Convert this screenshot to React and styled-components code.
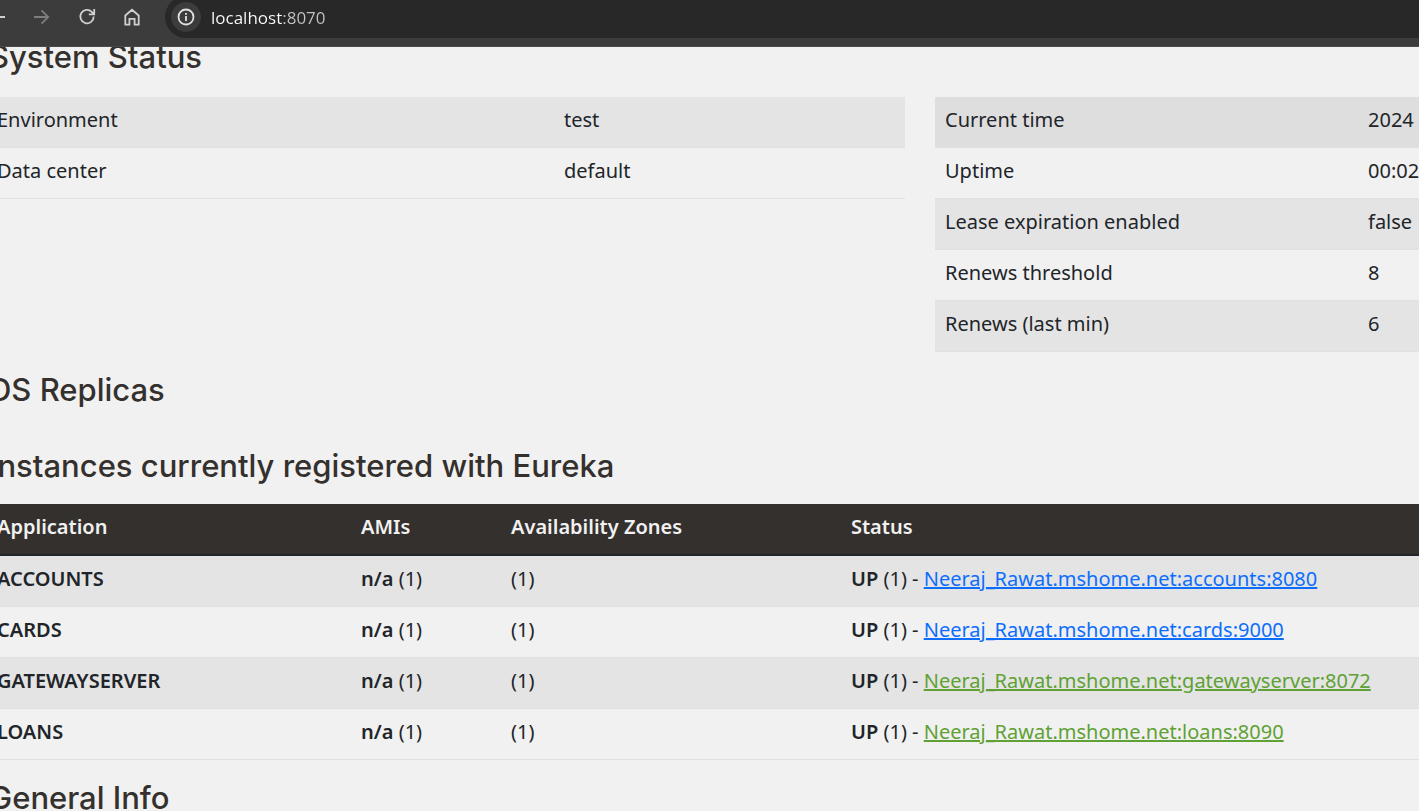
import React from "react";
import styled, { createGlobalStyle } from "styled-components";

const GlobalStyle = createGlobalStyle`
  * { box-sizing: border-box; }
  html, body { margin: 0; background: #f1f1f1; }
  body {
    color: #212529;
    font-family: "Noto Sans", sans-serif;
    font-size: 20px;
    line-height: 30px;
    overflow: hidden;
  }
`;

const Toolbar = styled.header`
  position: relative;
  z-index: 1;
  display: flex;
  align-items: flex-start;
  height: 47px;
  background: #3c3c3c;
  border-bottom: 1px solid #4a4a4a;
  overflow: hidden;
`;

const NavButtons = styled.nav`
  display: flex;
  flex: none;
  gap: 17px;
  margin-left: -17px;
  padding: 3px 0;
`;

const NavButton = styled.button`
  display: flex;
  align-items: center;
  justify-content: center;
  width: 28px;
  height: 28px;
  padding: 0;
  border: 0;
  background: none;
  color: ${(p) => (p.disabled ? "#7d7d7d" : "#cfcfcf")};
`;

const AddressBar = styled.div`
  display: flex;
  flex: 1;
  align-items: center;
  gap: 10px;
  height: 42px;
  margin: -4px 0 0 19px;
  padding-left: 6px;
  background: #282828;
  border-radius: 21px 0 0 21px;
`;

const InfoButton = styled.button`
  display: flex;
  align-items: center;
  justify-content: center;
  width: 30px;
  height: 30px;
  padding: 0;
  border: 0;
  border-radius: 50%;
  background: #3c3c3c;
  color: #e3e3e3;
`;

const AddressInput = styled.input`
  flex: 1;
  min-width: 0;
  height: 30px;
  padding: 0;
  border: 0;
  outline: 0;
  color: #ffffff;
  font-family: "Open Sans", sans-serif;
  font-size: 17px;
  background: linear-gradient(90deg, #ffffff 72px, #c4c4c4 72px);
  background-clip: text;
  -webkit-text-fill-color: transparent;
`;

const Page = styled.main`
  margin: -10px 0 0 -13px;
`;

const Heading = styled.h1`
  margin: 0;
  padding: ${(p) => p.$pad || "18px 0"};
  color: #34302d;
  font-family: Inter, sans-serif;
  font-size: 31px;
  font-weight: 500;
  line-height: 40px;
  text-indent: 2px;
  white-space: nowrap;
`;

const StatusGrid = styled.div`
  display: grid;
  grid-template-columns: 918fr 484fr;
  align-items: start;
  gap: 30px;
`;

const Table = styled.table`
  width: 100%;
  table-layout: fixed;
  border-collapse: separate;
  border-spacing: 0;
  white-space: nowrap;
`;

const Row = styled.tr`
  background: ${(p) => (p.$hovered ? "#dedede" : "#f1f1f1")};
  &:nth-child(odd) {
    background: ${(p) => (p.$hovered ? "#dedede" : "#e4e4e4")};
  }
`;

const Cell = styled.td`
  width: ${(p) => p.$width || "auto"};
  padding: 8px 10px 12px;
  border-bottom: 1px solid #dee0e3;
`;

const HeadCell = styled.th`
  width: ${(p) => p.$width || "auto"};
  padding: 8px 10px 12px;
  background: #34302d;
  border-bottom: 2px solid #212529;
  color: #f1f1f1;
  font-weight: 600;
  text-align: left;
`;

const Strong = styled.b`
  font-weight: 600;
`;

const InstanceLink = styled.a`
  color: ${(p) => (p.$green ? "#5fa134" : "#0d6efd")};
  text-decoration: underline;
  text-decoration-thickness: 2px;
`;

const environment = [
  ["Environment", "test"],
  ["Data center", "default"],
];

const runtime = [
  ["Current time", "2024"],
  ["Uptime", "00:02"],
  ["Lease expiration enabled", "false"],
  ["Renews threshold", "8"],
  ["Renews (last min)", "6"],
];

const instances = [
  ["ACCOUNTS", "Neeraj_Rawat.mshome.net:accounts:8080", false],
  ["CARDS", "Neeraj_Rawat.mshome.net:cards:9000", false],
  ["GATEWAYSERVER", "Neeraj_Rawat.mshome.net:gatewayserver:8072", true],
  ["LOANS", "Neeraj_Rawat.mshome.net:loans:8090", true],
];

function Icon({ children }) {
  return (
    <svg width="20" height="20" viewBox="0 0 20 20" fill="none" stroke="currentColor" strokeWidth="1.8" aria-hidden="true">
      {children}
    </svg>
  );
}

function PropertyTable({ rows, labelWidth, hoveredRow }) {
  return (
    <Table>
      <tbody>
        {rows.map(([label, value], i) => (
          <Row key={label} $hovered={i === hoveredRow}>
            <Cell $width={labelWidth}>{label}</Cell>
            <Cell>{value}</Cell>
          </Row>
        ))}
      </tbody>
    </Table>
  );
}

export default function App() {
  return (
    <>
      <GlobalStyle />
      <Toolbar>
        <NavButtons>
          <NavButton aria-label="Back">
            <Icon><path d="M18 10H3M9 4l-6 6 6 6" /></Icon>
          </NavButton>
          <NavButton aria-label="Forward" disabled>
            <Icon><path d="M2 10H16.500M9.500 3.300L16.200 10l-6.700 6.700" /></Icon>
          </NavButton>
          <NavButton aria-label="Reload">
            <Icon><path d="M16.700 9.500A6.700 6.700 0 1 1 14.700 4.800L17 7M17.200 2V7.400H11.800" /></Icon>
          </NavButton>
          <NavButton aria-label="Home">
            <Icon><path d="M3.300 8.500L10 2.700l6.700 5.800V17.600H12.600V11.800H7.400V17.600H3.300Z" /></Icon>
          </NavButton>
        </NavButtons>
        <AddressBar>
          <InfoButton aria-label="View site information">
            <Icon>
              <circle cx="10" cy="10" r="7.500" />
              <path d="M10 9v5M10 6v1.800" />
            </Icon>
          </InfoButton>
          <AddressInput aria-label="Address" defaultValue="localhost:8070" />
        </AddressBar>
      </Toolbar>
      <Page>
        <Heading $pad="0 0 20px">System Status</Heading>
        <StatusGrid>
          <PropertyTable rows={environment} labelWidth="567px" />
          <PropertyTable rows={runtime} labelWidth="423px" hoveredRow={0} />
        </StatusGrid>
        <Heading as="h2">DS Replicas</Heading>
        <Heading as="h2">Instances currently registered with Eureka</Heading>
        <Table>
          <thead>
            <tr>
              <HeadCell $width="364px">Application</HeadCell>
              <HeadCell $width="150px">AMIs</HeadCell>
              <HeadCell $width="340px">Availability Zones</HeadCell>
              <HeadCell>Status</HeadCell>
            </tr>
          </thead>
          <tbody>
            {instances.map(([name, host, green]) => (
              <Row key={name}>
                <Cell><Strong>{name}</Strong></Cell>
                <Cell><Strong>n/a</Strong> (1)</Cell>
                <Cell>(1)</Cell>
                <Cell>
                  <Strong>UP</Strong> (1) -{" "}
                  <InstanceLink href="#" $green={green}>{host}</InstanceLink>
                </Cell>
              </Row>
            ))}
          </tbody>
        </Table>
        <Heading as="h2">General Info</Heading>
      </Page>
    </>
  );
}
